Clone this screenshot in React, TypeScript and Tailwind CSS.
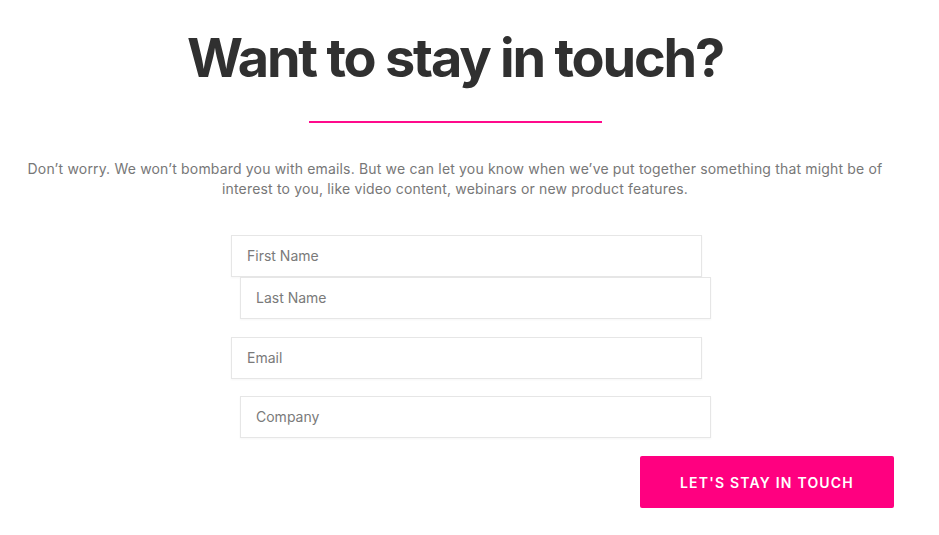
// Newsletter signup section

import React from 'react';

const fields = [
  { name: 'firstName', label: 'First Name', shifted: false, gap: 'mt-0' },
  { name: 'lastName', label: 'Last Name', shifted: true, gap: 'mt-0' },
  { name: 'email', label: 'Email', shifted: false, gap: 'mt-[18px]' },
  { name: 'company', label: 'Company', shifted: true, gap: 'mt-[17px]' },
];

export default function App() {
  return (
    <div className="min-h-[535px] w-full bg-white font-['Inter','Liberation_Sans',sans-serif]">
      <div className="w-[910px] flex flex-col items-center pt-[31px]">
        {/* Heading */}
        <h1 className="text-[54px] leading-none font-bold tracking-[-2.2px] text-[#303030]">
          Want to stay in touch?
        </h1>

        {/* Pink divider */}
        <div className="mt-[36px] h-[2px] w-[293px] bg-[#ff0a8c]" />

        {/* Intro text */}
        <p className="mt-[36px] text-center text-[14px] leading-[20px] tracking-[0.17px] text-[#777777]">
          Don’t worry. We won’t bombard you with emails. But we can let you know when we’ve put together something that might be of
          <br />
          interest to you, like video content, webinars or new product features.
        </p>

        {/* Form */}
        <form className="mt-[36px] w-full flex flex-col pl-[231px]">
          {fields.map((field) => (
            <input
              key={field.name}
              type="text"
              name={field.name}
              placeholder={field.label}
              className={`${field.gap} ${field.shifted ? 'ml-[9px]' : 'ml-0'} h-[42px] w-[471px] border border-[#e6e6e6] bg-white px-[15px] pb-[2px] text-[14px] text-[#555] placeholder:text-[#7a7a7a] shadow-[0_1px_2px_rgba(0,0,0,0.04)] outline-none`}
            />
          ))}

          <div className="mt-[18px] flex justify-end pr-[16px]">
            <button
              type="button"
              className="h-[52px] w-[254px] rounded-[2px] bg-[#ff0080] text-[14px] font-semibold tracking-[1.2px] text-white"
            >
              LET'S STAY IN TOUCH
            </button>
          </div>
        </form>
      </div>
    </div>
  );
}
